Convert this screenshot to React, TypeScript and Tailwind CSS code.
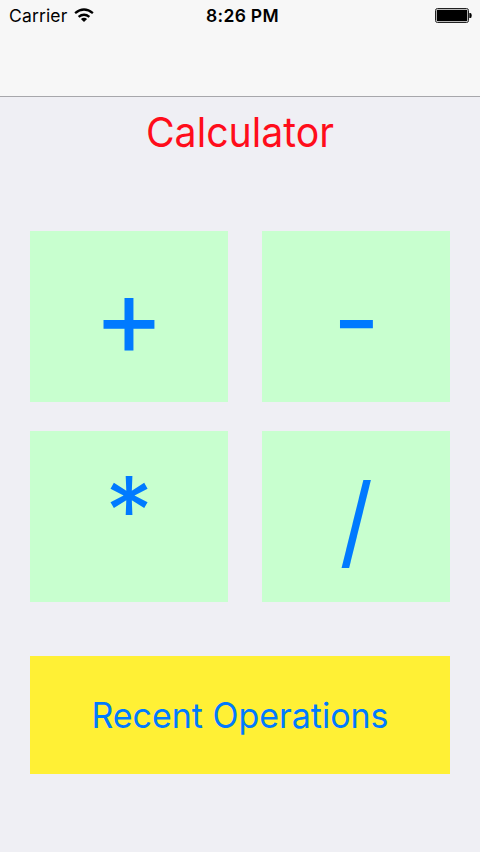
const operations = [
  { symbol: "+", label: "Add", glyph: "text-[108px] translate-y-[-1px] scale-y-[1.03]" },
  { symbol: "-", label: "Subtract", glyph: "text-[103px] translate-x-[.5px] translate-y-[2.5px]" },
  { symbol: "*", label: "Multiply", glyph: "text-[95px] translate-y-[-5.5px]" },
  { symbol: "/", label: "Divide", glyph: "text-[101px] translate-y-[4px] scale-x-[.92]" },
];

function WifiIcon() {
  return (
    <svg width="20" height="15" viewBox="0 0 20 15" fill="none" stroke="black" strokeWidth="2.3">
      <path d="M1.100 5.200Q10-2.200 18.900 5.200M4.600 8.900Q10 4.500 15.400 8.900" />
      <path d="M6.900 11Q10 8.500 13.100 11L10 14Z" fill="black" stroke="none" />
    </svg>
  );
}

function BatteryIcon() {
  return (
    <svg className="justify-self-end" width="37" height="15" viewBox="0 0 37 15">
      <rect x=".5" y=".5" width="33" height="14" rx="2" fill="#f7f7f7" stroke="#222" />
      <rect x="1.700" y="1.700" width="30.600" height="11.600" rx=".8" />
      <path d="M34.300 5H35.500Q36.700 5 36.700 7.500T35.500 10H34.300Z" />
    </svg>
  );
}

export default function App() {
  return (
    <div className="flex h-[852px] w-[480px] flex-col overflow-hidden bg-[#efeff4] font-['Inter',sans-serif]">
      <header className="h-[97px] border-b border-[#a7a7ab] bg-[#f7f7f7]">
        <div className="grid h-[31px] grid-cols-3 items-center pr-[8px] pl-[9px] text-[17.5px] text-black">
          <div className="flex items-center gap-[7px]">
            <span className="pt-px tracking-[.15px]">Carrier</span>
            <WifiIcon />
          </div>
          <span className="pt-px pl-[4px] text-center font-semibold tracking-[.3px] whitespace-nowrap">8:26 PM</span>
          <BatteryIcon />
        </div>
      </header>
      <main className="px-[30px]">
        <h1 className="mt-[10px] scale-x-[.957] text-center text-[41px] leading-[50px] text-[#ff0d1b]">Calculator</h1>
        <div className="mt-[74px] grid grid-cols-[198px_188px] gap-x-[34px] gap-y-[29px] text-[#007aff]">
          {operations.map(({ symbol, label, glyph }) => (
            <button key={symbol} aria-label={label} className="flex h-[171px] items-center justify-center bg-[#c8ffcf]">
              <span className={`block leading-[1.5] ${glyph}`}>{symbol}</span>
            </button>
          ))}
        </div>
        <button className="mt-[54px] h-[118px] w-full bg-[#fff035] text-[35px] text-[#007aff]">
          <span className="block scale-x-[.97] translate-y-[-.5px]">Recent Operations</span>
        </button>
      </main>
    </div>
  );
}
